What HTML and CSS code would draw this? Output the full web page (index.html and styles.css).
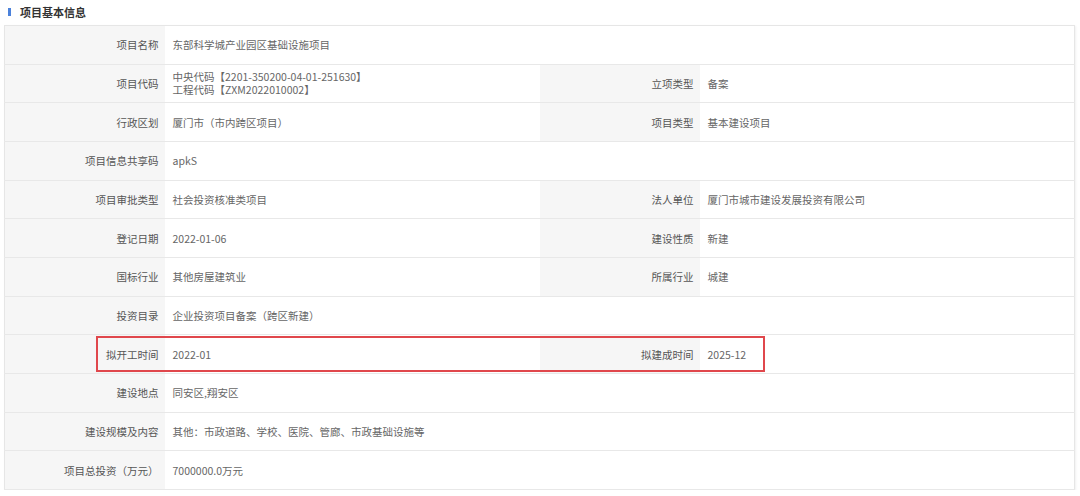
FILE: index.html
```html
<!DOCTYPE html>
<html lang="zh-CN">
<head>
    <meta charset="UTF-8">
    <meta name="viewport" content="width=device-width, initial-scale=1.0">
    <title>项目基本信息</title>
    <link rel="stylesheet" href="styles.css">
</head>
<body>
    <div class="panel">
        <h3 class="title">项目基本信息</h3>
        <div class="table-wrap">
            <table class="info">
                <colgroup>
                    <col class="c-label">
                    <col class="c-value">
                    <col class="c-label2">
                    <col>
                </colgroup>
                <tr>
                    <th>项目名称</th>
                    <td colspan="3">东部科学城产业园区基础设施项目</td>
                </tr>
                <tr>
                    <th>项目代码</th>
                    <td class="two-line">中央代码【2201-350200-04-01-251630】<br>工程代码【ZXM2022010002】</td>
                    <th>立项类型</th>
                    <td>备案</td>
                </tr>
                <tr>
                    <th>行政区划</th>
                    <td>厦门市（市内跨区项目）</td>
                    <th>项目类型</th>
                    <td>基本建设项目</td>
                </tr>
                <tr>
                    <th>项目信息共享码</th>
                    <td colspan="3">apkS</td>
                </tr>
                <tr>
                    <th>项目审批类型</th>
                    <td>社会投资核准类项目</td>
                    <th>法人单位</th>
                    <td>厦门市城市建设发展投资有限公司</td>
                </tr>
                <tr>
                    <th>登记日期</th>
                    <td>2022-01-06</td>
                    <th>建设性质</th>
                    <td>新建</td>
                </tr>
                <tr>
                    <th>国标行业</th>
                    <td>其他房屋建筑业</td>
                    <th>所属行业</th>
                    <td>城建</td>
                </tr>
                <tr>
                    <th>投资目录</th>
                    <td colspan="3">企业投资项目备案（跨区新建）</td>
                </tr>
                <tr>
                    <th>拟开工时间</th>
                    <td>2022-01</td>
                    <th>拟建成时间</th>
                    <td>2025-12</td>
                </tr>
                <tr>
                    <th>建设地点</th>
                    <td colspan="3">同安区,翔安区</td>
                </tr>
                <tr>
                    <th>建设规模及内容</th>
                    <td colspan="3">其他：市政道路、学校、医院、管廊、市政基础设施等</td>
                </tr>
                <tr>
                    <th>项目总投资（万元）</th>
                    <td colspan="3">7000000.0万元</td>
                </tr>
            </table>
            <div class="mark"></div>
        </div>
    </div>
</body>
</html>
```

FILE: styles.css
```css
*{
    margin: 0;
    padding: 0;
    box-sizing: border-box;
}
body{
    background: #fff;
    font-family: "Microsoft YaHei", "Noto Sans CJK SC", sans-serif;
    color: #666;
}
.panel{
    padding: 5px 5px 0 4px;
}
.title{
    display: flex;
    align-items: center;
    font-size: 11px;
    font-weight: bold;
    color: #333;
    height: 14px;
    padding-left: 4px;
    margin-bottom: 6px;
}
.title::before{
    content: "";
    width: 3px;
    height: 8px;
    background: #4c82db;
    margin-right: 9px;
}
.table-wrap{
    position: relative;
}
.info{
    width: 1071px;
    border-collapse: collapse;
    table-layout: fixed;
    font-size: 10.5px;
    border: 1px solid #e6e6e6;
    box-shadow: 1px 1px 2px rgba(0,0,0,0.06);
}
.c-label{
    width: 160px;
}
.c-value{
    width: 375px;
}
.c-label2{
    width: 160px;
}
.info tr{
    height: 38.67px;
}
.info th,
.info td{
    border-bottom: 1px solid #e8e8e8;
    vertical-align: middle;
    line-height: 13px;
}
.info th{
    background: #f6f6f6;
    color: #555;
    font-weight: normal;
    text-align: right;
    padding: 0 6px 0 0;
    white-space: nowrap;
}
.info td{
    background: #fff;
    text-align: left;
    padding: 0 8px;
    white-space: nowrap;
}
.info td.two-line{
    line-height: 13.5px;
}
.mark{
    position: absolute;
    left: 92px;
    top: 311px;
    width: 669px;
    height: 36px;
    border: 2px solid #e0474c;
}
```
